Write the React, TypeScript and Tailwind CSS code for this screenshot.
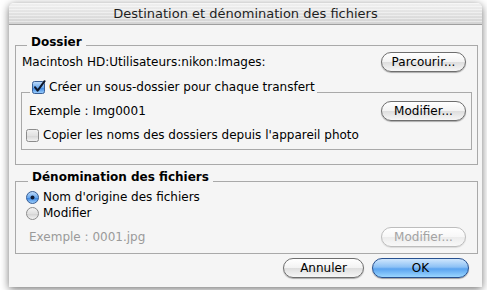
import React from "react";

type Kind = "normal" | "disabled" | "primary";

function Btn({ label, className, kind = "normal" }: { label: string; className: string; kind?: Kind }) {
  const base =
    "h-[20px] shrink-0 rounded-full flex items-center justify-center text-[12px] leading-none ";
  const k =
    kind === "primary"
      ? "border border-[#27508f] text-black bg-[linear-gradient(to_bottom,#cfe6fd_0%,#8cc1f5_45%,#5aa3ef_55%,#9ad6ff_100%)] shadow-[0_1px_1px_rgba(0,0,0,0.35)]"
      : kind === "disabled"
      ? "border border-[#bdbdbd] text-[#a3a3a3] bg-[linear-gradient(to_bottom,#ffffff_0%,#f7f7f7_50%,#ececec_51%,#f8f8f8_100%)] shadow-[0_1px_1px_rgba(0,0,0,0.1)]"
      : "border border-[#6e6e6e] text-black bg-[linear-gradient(to_bottom,#ffffff_0%,#f3f3f3_48%,#dedede_52%,#f6f6f6_100%)] shadow-[0_1px_1px_rgba(0,0,0,0.3)]";
  return <div className={base + k + " " + className}>{label}</div>;
}

function CheckBox({ checked }: { checked: boolean }) {
  return (
    <svg width="14" height="14" viewBox="0 0 14 14" className="shrink-0">
      <defs>
        <linearGradient id={checked ? "cbOn" : "cbOff"} x1="0" y1="0" x2="0" y2="1">
          {checked ? (
            <>
              <stop offset="0" stopColor="#c3ddfa" />
              <stop offset="0.5" stopColor="#6aa9ee" />
              <stop offset="0.55" stopColor="#3d86e0" />
              <stop offset="1" stopColor="#9fd2ff" />
            </>
          ) : (
            <>
              <stop offset="0" stopColor="#f2f2f2" />
              <stop offset="0.5" stopColor="#e2e2e2" />
              <stop offset="0.55" stopColor="#d6d6d6" />
              <stop offset="1" stopColor="#f4f4f4" />
            </>
          )}
        </linearGradient>
      </defs>
      <rect
        x="0.5"
        y="1.5"
        width="12"
        height="12"
        rx="2"
        fill={checked ? "url(#cbOn)" : "url(#cbOff)"}
        stroke={checked ? "#3a5f95" : "#8c8c8c"}
      />
      {checked && (
        <path d="M3 7.2 L5.6 10.6 L12.6 1.2" fill="none" stroke="#10182a" strokeWidth="2" strokeLinecap="round" strokeLinejoin="round" />
      )}
    </svg>
  );
}

function Radio({ on }: { on: boolean }) {
  return (
    <svg width="13" height="13" viewBox="0 0 13 13" className="shrink-0">
      <defs>
        <linearGradient id={on ? "rdOn" : "rdOff"} x1="0" y1="0" x2="0" y2="1">
          {on ? (
            <>
              <stop offset="0" stopColor="#c3ddfa" />
              <stop offset="0.5" stopColor="#6aa9ee" />
              <stop offset="0.55" stopColor="#3d86e0" />
              <stop offset="1" stopColor="#a5d6ff" />
            </>
          ) : (
            <>
              <stop offset="0" stopColor="#f4f4f4" />
              <stop offset="0.5" stopColor="#e0e0e0" />
              <stop offset="0.55" stopColor="#d3d3d3" />
              <stop offset="1" stopColor="#f6f6f6" />
            </>
          )}
        </linearGradient>
      </defs>
      <circle cx="6.5" cy="6.5" r="6" fill={on ? "url(#rdOn)" : "url(#rdOff)"} stroke={on ? "#3a5f95" : "#8c8c8c"} />
      {on && <circle cx="6.5" cy="6.5" r="2" fill="#0f1a33" />}
    </svg>
  );
}

export default function App() {
  return (
    <div className="w-[487px] h-[290px] bg-white overflow-hidden font-['Lucida_Grande','DejaVu_Sans',sans-serif] text-[12px] text-black">
      <div className="ml-[9px] mt-[3px] w-[473px] h-[284px] bg-[#f5f5f5] rounded-t-[5px] shadow-[0_2px_9px_rgba(0,0,0,0.55)] flex flex-col overflow-hidden">
        <div className="h-[22px] shrink-0 flex items-center justify-center text-[13px] text-[#1e1e1e] border-b border-[#9f9f9f] bg-[image:repeating-linear-gradient(to_bottom,rgba(255,255,255,0.45)_0px,rgba(255,255,255,0.45)_1px,transparent_1px,transparent_3px),linear-gradient(to_bottom,#f0f0f0,#d3d3d3)]">
          Destination et dénomination des fichiers
        </div>

        {/* Dossier */}
        <div className="relative mt-[20px] ml-[6px] mr-[4px] border border-[#a9a9a9] pt-[6px] pb-[14px]">
          <span className="absolute left-[11px] top-[-12px] px-[4px] bg-[#f5f5f5] font-bold leading-[16px]">Dossier</span>
          <div className="flex items-center h-[20px] pl-[6px] pr-[11px]">
            <span className="flex-1 leading-[16px]">Macintosh HD:Utilisateurs:nikon:Images:</span>
            <Btn label="Parcourir..." className="w-[85px]" />
          </div>

          <div className="relative mt-[20px] mx-[5px] border border-[#a9a9a9] pt-[8px] pb-[6px]">
            <div className="absolute left-[8px] top-[-14px] flex items-center gap-[3px] pl-[2px] pr-[2px] bg-[#f5f5f5] h-[16px]">
              <CheckBox checked />
              <span className="leading-[16px]">Créer un sous-dossier pour chaque transfert</span>
            </div>
            <div className="flex items-center h-[20px] pl-[7px] pr-[5px]">
              <span className="flex-1 leading-[16px]">Exemple : Img0001</span>
              <Btn label="Modifier..." className="w-[85px]" />
            </div>
            <div className="flex items-center gap-[3px] h-[16px] mt-[6px] pl-[4px]">
              <CheckBox checked={false} />
              <span className="leading-[16px]">Copier les noms des dossiers depuis l'appareil photo</span>
            </div>
          </div>
        </div>

        {/* Dénomination */}
        <div className="relative mt-[16px] ml-[6px] mr-[4px] border border-[#a9a9a9] pt-[7px] pb-[6px]">
          <span className="absolute left-[12px] top-[-13px] px-[4px] bg-[#f5f5f5] font-bold leading-[16px]">Dénomination des fichiers</span>
          <div className="flex items-center gap-[4px] h-[16px] pl-[10px]">
            <Radio on />
            <span className="leading-[16px]">Nom d'origine des fichiers</span>
          </div>
          <div className="flex items-center gap-[4px] h-[16px] pl-[10px]">
            <Radio on={false} />
            <span className="leading-[16px]">Modifier</span>
          </div>
          <div className="flex items-center h-[20px] mt-[6px] pl-[13px] pr-[11px]">
            <span className="flex-1 leading-[16px] text-[#9a9a9a]">Exemple : 0001.jpg</span>
            <Btn label="Modifier..." kind="disabled" className="w-[85px]" />
          </div>
        </div>

        <div className="flex justify-end gap-[8px] mt-[4px] pr-[13px]">
          <Btn label="Annuler" className="w-[81px]" />
          <Btn label="OK" kind="primary" className="w-[97px]" />
        </div>
      </div>
    </div>
  );
}
